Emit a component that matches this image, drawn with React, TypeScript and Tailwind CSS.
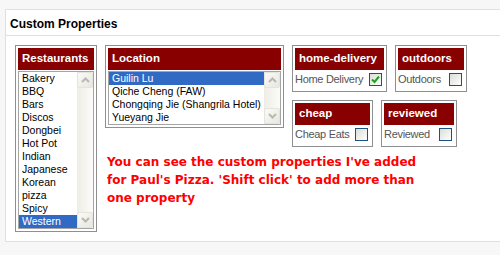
import React from "react";

const arial = { fontFamily: '"Liberation Sans", Arial, sans-serif' };

function Chevron({ up }: { up: boolean }) {
  return (
    <svg width="9" height="6" viewBox="0 0 9 6">
      <path
        d={up ? "M1 5 L4.5 1.5 L8 5" : "M1 1 L4.5 4.5 L8 1"}
        fill="none"
        stroke="#b9b9b0"
        strokeWidth="2"
      />
    </svg>
  );
}

function ScrollBar() {
  return (
    <div className="w-[16px] flex flex-col bg-gradient-to-r from-[#eeede5] to-[#fbfbf9]">
      <div className="h-[16px] w-[16px] flex items-center justify-center border border-[#e4e3dc] bg-gradient-to-br from-[#fafaf8] to-[#e8e7e0] rounded-[2px]">
        <Chevron up />
      </div>
      <div className="flex-1" />
      <div className="h-[16px] w-[16px] flex items-center justify-center border border-[#e4e3dc] bg-gradient-to-br from-[#fafaf8] to-[#e8e7e0] rounded-[2px]">
        <Chevron up={false} />
      </div>
    </div>
  );
}

function ListBox({ items, selected }: { items: string[]; selected: string }) {
  return (
    <div className="mt-[1px] flex border border-[#a5a5a5] bg-white">
      <div className="flex-1 flex flex-col">
        {items.map((it) => (
          <div
            key={it}
            className={
              "h-[13px] leading-[13px] text-[10.5px] pl-[3px] whitespace-nowrap " +
              (it === selected ? "bg-[#316ac5] text-white" : "text-black")
            }
            style={arial}
          >
            {it}
          </div>
        ))}
      </div>
      <ScrollBar />
    </div>
  );
}

function Header({ label }: { label: string }) {
  return (
    <div
      className="h-[22px] bg-[#880000] text-white font-bold text-[11.5px] pl-[4px] flex items-center whitespace-nowrap"
      style={arial}
    >
      {label}
    </div>
  );
}

function CheckBox({ checked }: { checked?: boolean }) {
  return (
    <div className="w-[13px] h-[13px] border border-[#1c5180] bg-gradient-to-br from-[#dcdcd7] to-white flex items-center justify-center">
      {checked && (
        <svg width="9" height="9" viewBox="0 0 9 9">
          <path d="M1 4.5 L3.5 7 L8 1.5" fill="none" stroke="#21a121" strokeWidth="2" />
        </svg>
      )}
    </div>
  );
}

function PropBox({
  title,
  label,
  width,
  checked,
}: {
  title: string;
  label: string;
  width: string;
  checked?: boolean;
}) {
  return (
    <div className={"border border-[#8f8f8f] p-[2px] bg-white " + width}>
      <Header label={title} />
      <div className="h-[19px] flex items-center justify-between pr-[2px]">
        <span className="text-[11px] tracking-[-0.3px] text-[#555]" style={arial}>
          {label}
        </span>
        <CheckBox checked={checked} />
      </div>
    </div>
  );
}

export default function App() {
  const restaurants = [
    "Bakery",
    "BBQ",
    "Bars",
    "Discos",
    "Dongbei",
    "Hot Pot",
    "Indian",
    "Japanese",
    "Korean",
    "pizza",
    "Spicy",
    "Western",
  ];
  const locations = [
    "Guilin Lu",
    "Qiche Cheng (FAW)",
    "Chongqing Jie (Shangrila Hotel)",
    "Yueyang Jie",
  ];
  return (
    <div className="w-[500px] h-[255px] overflow-hidden bg-[#f7f7f7] pt-[9px] pl-[5px]">
      <div className="w-[520px] h-[233px] border border-[#e0e0e0] bg-white">
        <div
          className="h-[26px] border-b border-[#e0e0e0] flex items-center px-[4px] pt-[2px] font-bold text-[12px] text-black"
          style={arial}
        >
          Custom Properties
        </div>
        <div className="pl-[9px] pt-[9px] flex items-start gap-2">
          <div className="w-[82px] border border-[#8f8f8f] p-[2px]">
            <Header label="Restaurants" />
            <ListBox items={restaurants} selected="Western" />
          </div>
          <div className="flex flex-col">
            <div className="flex items-start gap-2">
              <div className="w-[179px] border border-[#8f8f8f] p-[2px]">
                <Header label="Location" />
                <ListBox items={locations} selected="Guilin Lu" />
              </div>
              <div className="flex flex-col gap-2">
                <div className="flex gap-2 items-start">
                  <PropBox title="home-delivery" label="Home Delivery" width="w-[95px]" checked />
                  <PropBox title="outdoors" label="Outdoors" width="w-[72px]" />
                </div>
                <div className="flex gap-2 items-start">
                  <PropBox title="cheap" label="Cheap Eats" width="w-[81px]" />
                  <PropBox title="reviewed" label="Reviewed" width="w-[76px]" />
                </div>
              </div>
            </div>
            <div
              className="mt-[6px] ml-[2px] text-[12px] leading-[18px] font-bold text-[#ff0000] whitespace-nowrap"
              style={{ fontFamily: '"DejaVu Sans", Verdana, sans-serif' }}
            >
              You can see the custom properties I've added
              <br />
              for Paul's Pizza. 'Shift click' to add more than
              <br />
              one property
            </div>
          </div>
        </div>
      </div>
    </div>
  );
}
